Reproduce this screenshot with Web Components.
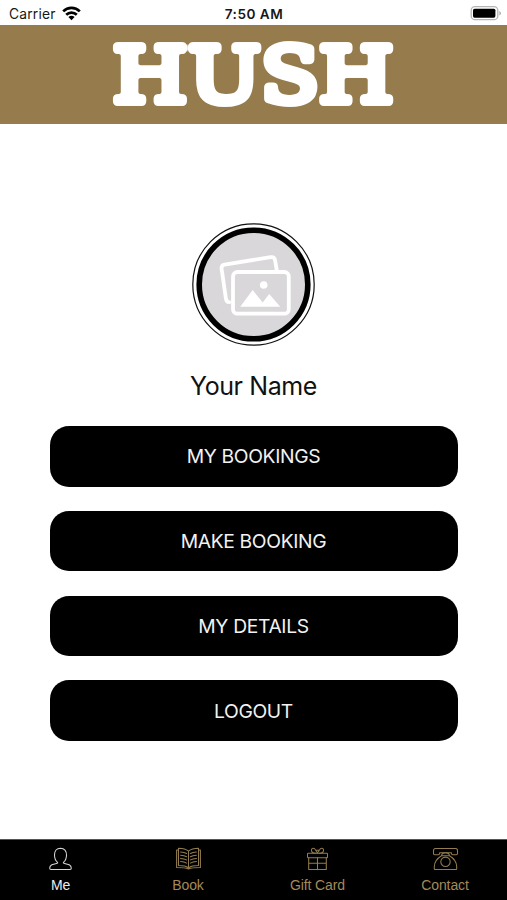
<!DOCTYPE html>
<html lang="en">
<head>
<meta charset="UTF-8">
<title>Hush</title>
<style>
    body {
        margin: 0;
        background: #fff;
        font-family: Inter, "Liberation Sans", sans-serif;
    }
</style>
</head>
<body>
<hush-app></hush-app>

<script>
class StatusBar extends HTMLElement {
    constructor() {
        super();
        this.attachShadow({ mode: 'open' });
        this.shadowRoot.innerHTML = `
            <style>
                :host {
                    display: grid;
                    grid-template-columns: 1fr auto 1fr;
                    align-items: center;
                    height: 25px;
                    padding: 2px 5px 0 9px;
                    box-sizing: border-box;
                    font-size: 13.8px;
                    color: #171717;
                }
                .carrier {
                    display: flex;
                    align-items: center;
                    gap: 6px;
                    letter-spacing: 0.2px;
                }
                .time {
                    font-weight: 600;
                    font-size: 13.6px;
                    letter-spacing: 0.5px;
                    padding-right: 3px;
                }
                .battery {
                    justify-self: end;
                }
                svg {
                    display: block;
                }
            </style>
            <div class="carrier">
                <span>Carrier</span>
                <svg width="19" height="15" viewBox="0 0 19 15" fill="none" stroke="#000" stroke-width="2.7">
                    <path d="M1.2 5.4a11.7 11.7 0 0 1 16.6 0"/>
                    <path d="M4.2 8.7a7.6 7.6 0 0 1 10.6 0"/>
                    <path d="M9.5 14.2 6.4 11.1a4.5 4.5 0 0 1 6.2 0z" fill="#000" stroke="none"/>
                </svg>
            </div>
            <span class="time">7:50 AM</span>
            <svg class="battery" width="32" height="15" viewBox="0 0 32 15">
                <rect x="1.2" y="0.7" width="26.6" height="13" rx="3.8" fill="#fff" stroke="#b5b5b5" stroke-width="1.3"/>
                <rect x="3" y="2.7" width="22.4" height="9" rx="1.6" fill="#000"/>
                <path d="M29.4 5c2 .8 2 3.7 0 4.5z" fill="#aaa"/>
            </svg>
        `;
    }
}

class BrandHeader extends HTMLElement {
    constructor() {
        super();
        this.attachShadow({ mode: 'open' });
        this.shadowRoot.innerHTML = `
            <style>
                :host {
                    display: flex;
                    justify-content: center;
                    height: 99px;
                    background: #967c4c;
                }
                svg {
                    display: block;
                }
                text {
                    font-family: "DejaVu Serif", serif;
                    font-size: 76.5px;
                    fill: #fff;
                    stroke: #fff;
                    stroke-width: 8.2px;
                    stroke-linejoin: round;
                }
            </style>
            <svg width="507" height="99" viewBox="0 0 507 99">
                <!-- blur then sharpen the alpha: soft typewriter corners -->
                <filter id="soften" x="-5%" y="-20%" width="110%" height="140%" color-interpolation-filters="sRGB">
                    <feGaussianBlur stdDeviation="1.3"/>
                    <feComponentTransfer>
                        <feFuncA type="linear" slope="3.2" intercept="-1.15"/>
                    </feComponentTransfer>
                </filter>
                <g filter="url(#soften)">
                    <text transform="scale(1.115 1)" x="101.2 169.2 233.8 286.2" y="77">HUSH</text>
                </g>
            </svg>
        `;
    }
}

class UserAvatar extends HTMLElement {
    constructor() {
        super();
        this.attachShadow({ mode: 'open' });
        this.shadowRoot.innerHTML = `
            <style>
                :host {
                    display: block;
                    width: 123px;
                    height: 123px;
                }
                svg {
                    display: block;
                }
            </style>
            <svg width="123" height="123" viewBox="0 0 123 123">
                <circle cx="61.5" cy="61.5" r="60.7" fill="#fff" stroke="#111" stroke-width="1.2"/>
                <circle cx="61.5" cy="61.5" r="54.3" fill="#d9d7da" stroke="#000" stroke-width="5.6"/>
                <g transform="translate(1.2 -.3)">
                    <g fill="none" stroke="#fff" stroke-width="3.8" stroke-linecap="round" stroke-linejoin="round">
                        <path d="M36 79.5c-2.2 0-2.8-1-3.2-3L28.4 46c-.3-2.4.6-3.7 3-4.1l46-7.4c2.5-.4 4.1.6 4.5 3l1.8 10.8"/>
                        <rect x="39.8" y="49.3" width="55.8" height="41.7" rx="4.5" fill="#d9d7da"/>
                    </g>
                    <circle cx="70.5" cy="62.3" r="3.8" fill="#fff"/>
                    <path d="M47 84 59.5 67.3 69.5 79.8 76 71.2 87 84z" fill="#fff"/>
                </g>
            </svg>
        `;
    }
}

class MenuButton extends HTMLElement {
    constructor() {
        super();
        this.attachShadow({ mode: 'open' });
        this.shadowRoot.innerHTML = `
            <style>
                :host {
                    display: block;
                }
                button {
                    display: block;
                    width: 100%;
                    height: 60.5px;
                    padding: 0;
                    border: 0;
                    border-radius: 19px;
                    background: #000;
                    color: #f2f2f2;
                    font: inherit;
                    font-size: 19.3px;
                    letter-spacing: -0.35px;
                }
            </style>
            <button><slot></slot></button>
        `;
    }
}

class TabItem extends HTMLElement {
    constructor() {
        super();
        this.attachShadow({ mode: 'open' });
        this.shadowRoot.innerHTML = `
            <style>
                :host {
                    display: flex;
                    flex-direction: column;
                    align-items: center;
                    gap: 6px;
                    color: #a48a58;
                    font: 14px/16px "Liberation Sans", sans-serif;
                    letter-spacing: -0.1px;
                }
                :host([active]) {
                    color: #ededed;
                }
                ::slotted(svg) {
                    display: block;
                    width: 27px;
                    height: 24px;
                    fill: none;
                    stroke: currentColor;
                    stroke-width: 1.05;
                    stroke-linecap: round;
                    stroke-linejoin: round;
                    opacity: 0.9;
                }
            </style>
            <slot name="icon"></slot>
            <span><slot></slot></span>
        `;
    }
}

class TabBar extends HTMLElement {
    constructor() {
        super();
        this.attachShadow({ mode: 'open' });
        this.shadowRoot.innerHTML = `
            <style>
                :host {
                    display: grid;
                    grid-template-columns: 121px 134px 125px 130px;
                    height: 61px;
                    padding-top: 7px;
                    box-sizing: border-box;
                    overflow: hidden;
                    border-top: 1px solid #555;
                    background: #000;
                }
            </style>
            <tab-item active>
                <svg slot="icon" viewBox="0 0 27 24">
                    <path d="M13.5 1.2c-3.9 0-6 2.8-6 6.9 0 3.500 1.300 6 3.100 7.300v.6c-2 .9-4.500 1-6.200 2-1.300.8-1.700 2.100-1.700 3.300 0 .8.500 1.300 1.300 1.300h19c.8 0 1.300-.5 1.300-1.300 0-1.200-.4-2.500-1.700-3.300-1.700-1-4.200-1.100-6.200-2v-.6c1.800-1.300 3.100-3.800 3.100-7.300 0-4.100-2.100-6.900-6-6.900z"/>
                </svg>
                Me
            </tab-item>
            <tab-item>
                <svg slot="icon" viewBox="0 0 27 24">
                    <path d="M13.5 4.2C11 2 7.8 1.3 3.5 1.3v17.2c4.3 0 7.5.4 10 2.3 2.5-1.9 5.7-2.3 10-2.3V1.3c-4.3 0-7.5.7-10 2.9zv16.6M3.5 3H1.6v17.500c5 0 8.700 0 11.900 1.500 3.200-1.500 6.900-1.500 11.900-1.500V3h-1.900"/>
                    <path d="M5.6 5c2.300.1 4.300.5 6 1.500M5.600 8.200c2.300.1 4.300.5 6 1.500M5.600 11.400c2.300.1 4.300.5 6 1.500M5.600 14.600c2.300.1 4.300.5 6 1.500M21.400 5c-2.300.1-4.300.5-6 1.500M21.400 8.200c-2.300.1-4.300.5-6 1.500M21.400 11.400c-2.300.1-4.300.5-6 1.500M21.400 14.600c-2.300.1-4.300.5-6 1.500"/>
                </svg>
                Book
            </tab-item>
            <tab-item>
                <svg slot="icon" viewBox="0 0 27 24">
                    <rect x="3.5" y="6.3" width="20" height="4.5" rx=".7"/>
                    <path d="M4.7 10.8v11.7h17.6V10.8M13.5 10.8v11.7M4.7 16.3h17.6"/>
                    <path d="M11.700 6.300C8.500 6.200 7.100 4.800 7.500 2.700c.4-2 3-1.800 3.900 0L13.500 6l2.100-3.300c.9-1.800 3.500-2 3.900 0 .4 2.100-1 3.500-4.200 3.600M11.900 3.300h3.200"/>
                </svg>
                Gift Card
            </tab-item>
            <tab-item>
                <svg slot="icon" viewBox="0 0 27 24">
                    <path d="M3.3 1.5h20.400c1 0 1.800.9 1.800 2.300v2.700c0 .9-.5 1.300-1.300 1.300h-3.500c-.8 0-1.300-.5-1.300-1.300V5.800H7.600v.7c0 .8-.5 1.300-1.300 1.300H2.800c-.8 0-1.300-.4-1.300-1.300V3.800c0-1.400.8-2.300 1.800-2.300z"/>
                    <path d="M9.5 8.800c.2-2 1.900-3 4-3s3.800 1 4 3M9.500 8.800h8c3.800 2.300 7.200 6.200 7.200 11v2c0 .4-.3.700-.7.700H3c-.4 0-.7-.3-.7-.7v-2c0-4.800 3.400-8.700 7.200-11z"/>
                    <circle cx="13.5" cy="14.8" r="4.7"/>
                </svg>
                Contact
            </tab-item>
        `;
    }
}

class HushApp extends HTMLElement {
    constructor() {
        super();
        this.attachShadow({ mode: 'open' });
        this.shadowRoot.innerHTML = `
            <style>
                :host {
                    display: flex;
                    flex-direction: column;
                    height: 900px;
                }
                main {
                    flex: 1;
                    display: flex;
                    flex-direction: column;
                    align-items: center;
                    padding-top: 99px;
                }
                h1 {
                    margin: 24px 0;
                    font-weight: 400;
                    font-size: 25px;
                    line-height: 32px;
                    letter-spacing: -0.4px;
                    color: #111;
                }
                nav {
                    display: flex;
                    flex-direction: column;
                    gap: 24.25px;
                    width: 408px;
                }
            </style>
            <status-bar></status-bar>
            <brand-header></brand-header>
            <main>
                <user-avatar></user-avatar>
                <h1>Your Name</h1>
                <nav>
                    <menu-button>MY BOOKINGS</menu-button>
                    <menu-button>MAKE BOOKING</menu-button>
                    <menu-button>MY DETAILS</menu-button>
                    <menu-button>LOGOUT</menu-button>
                </nav>
            </main>
            <tab-bar></tab-bar>
        `;
    }
}

customElements.define('status-bar', StatusBar);
customElements.define('brand-header', BrandHeader);
customElements.define('user-avatar', UserAvatar);
customElements.define('menu-button', MenuButton);
customElements.define('tab-item', TabItem);
customElements.define('tab-bar', TabBar);
customElements.define('hush-app', HushApp);
</script>
</body>
</html>
